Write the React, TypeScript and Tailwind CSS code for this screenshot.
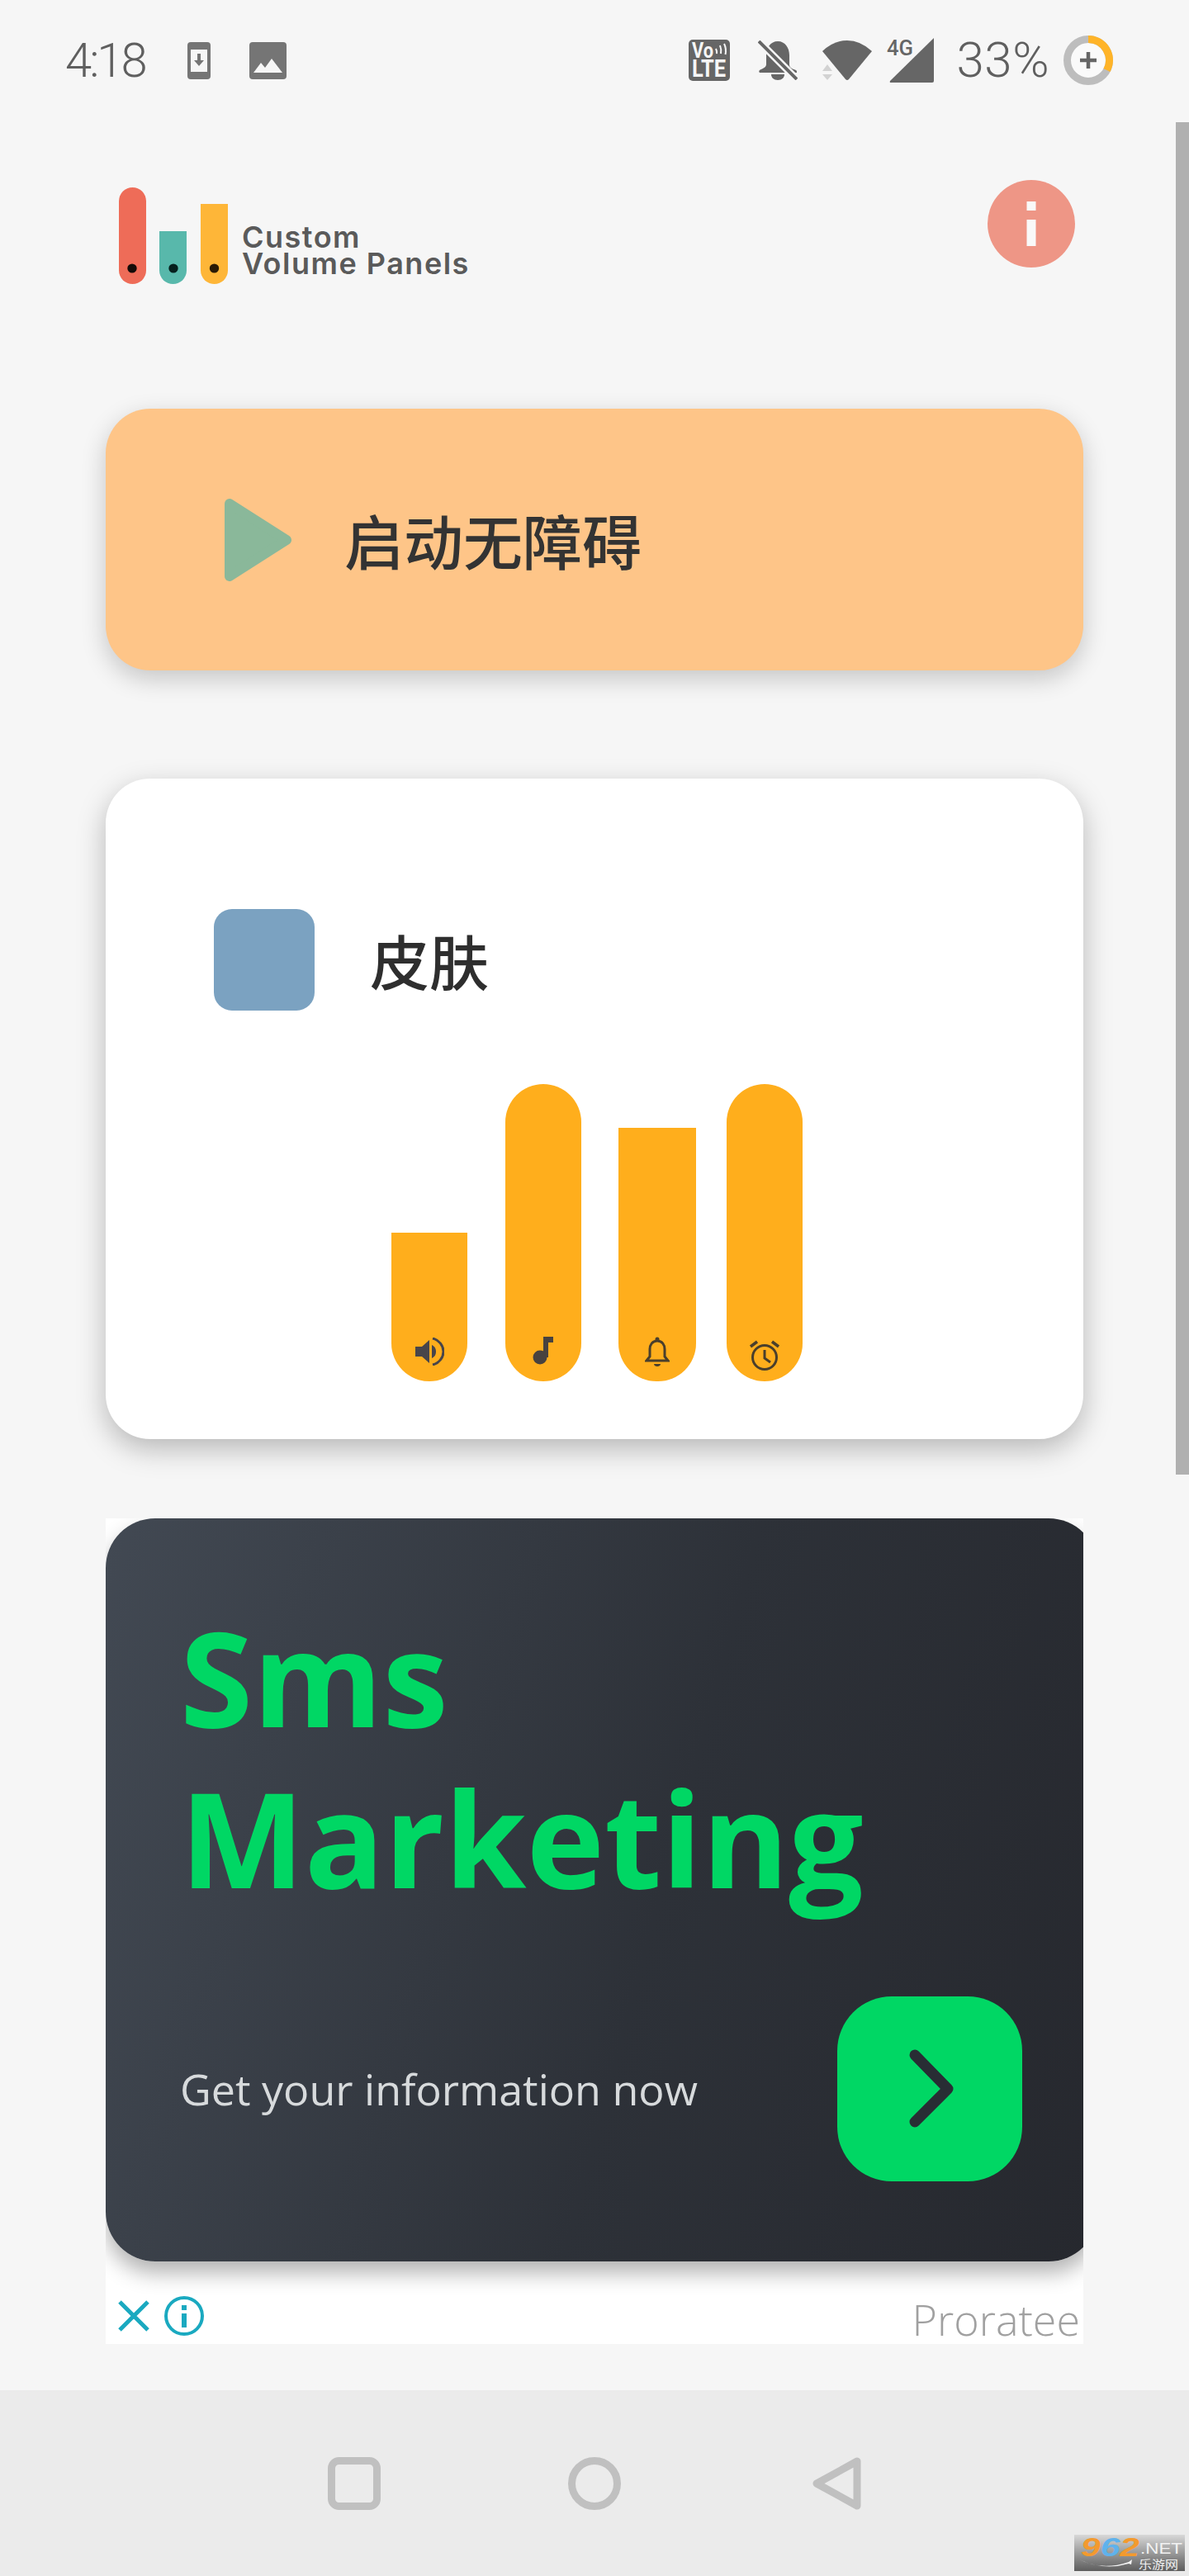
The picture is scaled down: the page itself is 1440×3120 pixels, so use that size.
type Bar = { height: string; shape: string; margin: string; width: string; pad: string; icon: 'speaker' | 'music' | 'bell' | 'alarm' }

const BARS: Bar[] = [
  { height: 'h-[180px]', shape: 'rounded-b-[46px]', margin: 'ml-0', width: 'w-[92px]', pad: 'pb-[19px]', icon: 'speaker' },
  { height: 'h-[360px]', shape: 'rounded-[46px]', margin: 'ml-[46px]', width: 'w-[92px]', pad: 'pb-[19px]', icon: 'music' },
  { height: 'h-[307px]', shape: 'rounded-b-[46px]', margin: 'ml-[45px]', width: 'w-[94px]', pad: 'pb-[17px]', icon: 'bell' },
  { height: 'h-[360px]', shape: 'rounded-[46px]', margin: 'ml-[37px]', width: 'w-[92px]', pad: 'pb-[13px]', icon: 'alarm' },
]

function VolumeIcon({ name }: { name: Bar['icon'] }) {
  if (name === 'speaker') {
    return (
      <svg width="36" height="34" viewBox="0 0 36 34" fill="#48454a">
        <path d="M1 11h8L18 3v28l-9-8H1z" />
        <path d="M21 9c4 2 5 5 5 8s-1 6-5 8z" />
        <path d="M22 1c8 2 13 9 13 16s-5 14-13 16" fill="none" stroke="#48454a" strokeWidth="3" />
      </svg>
    )
  }
  if (name === 'music') {
    return (
      <svg width="26" height="36" viewBox="0 0 26 36" fill="#48423f">
        <circle cx="9" cy="26" r="8.5" />
        <path d="M13 1h12v7h-6v18h-6z" />
      </svg>
    )
  }
  if (name === 'bell') {
    return (
      <svg width="30" height="37" viewBox="0 0 30 37" fill="none" stroke="#4a3f2c" strokeWidth="3">
        <path d="M15 5c-6 0-9 5-9 10v9l-4 5h26l-4-5v-9c0-5-3-10-9-10z" />
        <circle cx="15" cy="3" r="2.5" fill="#4a3f2c" stroke="none" />
        <path d="M11 33h8c0 2-2 3-4 3s-4-1-4-3z" fill="#4a3f2c" stroke="none" />
      </svg>
    )
  }
  return (
    <svg width="38" height="38" viewBox="0 0 38 38" fill="none" stroke="#4a3f2c" strokeWidth="3">
      <circle cx="19" cy="22" r="14.5" />
      <path d="M19 13v10l7 5" />
      <path d="M2 9l8-6M36 9l-8-6" strokeWidth="3.5" />
    </svg>
  )
}

function DownloadPhone() {
  return (
    <svg width="28" height="45" viewBox="0 0 28 45">
      <rect width="28" height="45" rx="4" fill="#757575" />
      <rect x="4" y="9" width="20" height="27" fill="#f6f6f6" />
      <path d="M12 14h4v8h4l-6 7-6-7h4z" fill="#757575" />
    </svg>
  )
}

function PictureIcon() {
  return (
    <svg width="45" height="45" viewBox="0 0 45 45">
      <rect width="45" height="45" rx="4" fill="#757575" />
      <path d="M5 37l9-12 5 6 8-11 13 17z" fill="#f6f6f6" />
    </svg>
  )
}

function VoLte() {
  return (
    <svg width="50" height="50" viewBox="0 0 50 50">
      <rect width="50" height="50" rx="5" fill="#666" />
      <text x="4" y="22" fontFamily="Roboto, sans-serif" fontWeight="700" fontSize="25" fill="#f6f6f6" textLength="26" lengthAdjust="spacingAndGlyphs">Vo</text>
      <path d="M33 11q1.5 3 1 6M38 7q2 5 1 10M43 5q3 6 1.500 13" fill="none" stroke="#f6f6f6" strokeWidth="2" />
      <text x="4" y="45" fontFamily="Roboto, sans-serif" fontWeight="700" fontSize="30" fill="#f6f6f6" textLength="41" lengthAdjust="spacingAndGlyphs">LTE</text>
    </svg>
  )
}

function BellOff() {
  return (
    <svg width="48" height="48" viewBox="0 0 48 48">
      <path d="M24 1c9 0 14 8 14 17v11c0 4 3 5 8 7 1 .500 1 2 1 3H2c-1-1-1-2 0-3 3-2 8-3 8-7V18C10 9 15 1 24 1z" fill="#666" />
      <path d="M16 41h16c0 4-3 7-8 7s-8-3-8-7z" fill="#666" />
      <path d="M1 1l46 46" stroke="#f6f6f6" strokeWidth="9" />
      <path d="M1 1l46 46" stroke="#666" strokeWidth="4" />
    </svg>
  )
}

function Wifi() {
  return (
    <svg width="60" height="49" viewBox="0 0 60 49">
      <path d="M0 13Q14 0 30 0T60 13L32 47q-2 2-4 0z" fill="#666" />
      <path d="M6 29l6 8H0zM0 41h12l-6 7z" fill="#d2d2d2" />
    </svg>
  )
}

function Signal() {
  return (
    <svg width="58" height="54" viewBox="0 0 58 54">
      <path d="M57 0v52q0 2-2 2H5q-2 0-1-2z" fill="#666" />
      <text x="0" y="21" fontFamily="Roboto, sans-serif" fontWeight="500" fontSize="25" fill="#666" textLength="32" lengthAdjust="spacingAndGlyphs">4G</text>
    </svg>
  )
}

function BatteryRing() {
  return (
    <svg width="60" height="60" viewBox="0 0 60 60">
      <circle cx="30" cy="30" r="25.500" fill="#fafafa" stroke="#bdbdbd" strokeWidth="9" />
      <path d="M30 4.500A25.500 25.500 0 0 1 52.500 42" fill="none" stroke="#ffb428" strokeWidth="9" />
      <path d="M30 20v20M20 30h20" stroke="#666" strokeWidth="4.500" />
    </svg>
  )
}

function StatusBar() {
  return (
    <div className="flex h-[146px] items-center justify-between pl-[79px] pr-[92px]">
      <div className="flex items-center">
        <span className="font-['Roboto',sans-serif] text-[58px] font-light leading-none tracking-[-3px] text-[#5f5f5f]">4:18</span>
        <span className="ml-[51px]"><DownloadPhone /></span>
        <span className="ml-[47px]"><PictureIcon /></span>
      </div>
      <div className="flex items-center">
        <VoLte />
        <span className="ml-[34px]"><BellOff /></span>
        <span className="ml-[30px]"><Wifi /></span>
        <span className="ml-[18px]"><Signal /></span>
        <span className="ml-[27px] font-['Roboto',sans-serif] text-[60px] font-light leading-none tracking-[0.5px] text-[#5f5f5f]">33%</span>
        <span className="ml-[17px]"><BatteryRing /></span>
      </div>
    </div>
  )
}

function Logo() {
  return (
    <div className="flex items-end">
      <svg width="132" height="117" viewBox="0 0 132 117">
        <rect width="33" height="117" rx="16.500" fill="#ee6c58" />
        <path d="M49 53h33v47.500a16.500 16.500 0 0 1-33 0z" fill="#58b8ab" />
        <path d="M99 20h33v80.500a16.500 16.500 0 0 1-33 0z" fill="#feb638" />
        <ellipse cx="16" cy="98" rx="5.700" ry="5.500" fill="#140b08" />
        <ellipse cx="66" cy="98" rx="5.700" ry="5.500" fill="#06201d" />
        <ellipse cx="115.500" cy="98" rx="5.700" ry="5.500" fill="#2a1a05" />
      </svg>
      <div className="mb-[9px] ml-[17px] font-['Inter',sans-serif] text-[36px] font-semibold leading-[32px] tracking-[1.5px] text-[#5a5a5a]">
        <div>Custom</div>
        <div>Volume Panels</div>
      </div>
    </div>
  )
}

function Header() {
  return (
    <div className="flex h-[349px] items-start justify-between pl-[144px] pr-[138px] pt-[72px]">
      <div className="pt-[9px]"><Logo /></div>
      <svg width="106" height="106" viewBox="0 0 106 106">
        <circle cx="53" cy="53" r="53" fill="#ee9686" />
        <path d="M47.500 26h11v11h-11zM47.500 48h11v32h-11z" fill="#f9f9f9" />
      </svg>
    </div>
  )
}

function StartCard() {
  return (
    <div className="flex h-[317px] items-center rounded-[54px] bg-[#fec588] pl-[144px] shadow-[0_10px_30px_rgba(0,0,0,0.2)]">
      <svg width="81" height="100" viewBox="0 0 81 100">
        <path d="M6 6l69 44-69 44z" fill="#8ab89a" stroke="#8ab89a" strokeWidth="12" strokeLinejoin="round" />
      </svg>
      <span className="ml-[64px] -mt-[2px] font-['Noto_Sans_CJK_SC',sans-serif] text-[72px] font-medium leading-none text-[#333333]">启动无障碍</span>
    </div>
  )
}

function SkinCard() {
  return (
    <div className="mt-[131px] h-[800px] rounded-[54px] bg-white pl-[131px] pt-[158px] shadow-[0_12px_34px_rgba(0,0,0,0.26)]">
      <div className="flex items-center">
        <div className="h-[123px] w-[122px] rounded-[22px] bg-[#7ba2c1]" />
        <span className="ml-[67px] -mt-[2px] font-['Noto_Sans_CJK_SC',sans-serif] text-[72px] font-medium leading-none text-[#2e2e2e]">皮肤</span>
      </div>
      <div className="ml-[215px] mt-[89px] flex items-end">
        {BARS.map((bar) => (
          <div key={bar.icon} className={`flex flex-col items-center justify-end bg-[#ffae1c] ${bar.height} ${bar.shape} ${bar.margin} ${bar.width} ${bar.pad}`}>
            <VolumeIcon name={bar.icon} />
          </div>
        ))}
      </div>
    </div>
  )
}

function AdCard() {
  return (
    <div className="mt-[96px] h-[1000px] overflow-hidden bg-white font-['Open_Sans',sans-serif]">
      <div className="h-[900px] w-[1202px] rounded-[60px] bg-linear-[105deg,#424953,#2d3138_55%,#26282e] pl-[90px] pr-[92px] pt-[94px] shadow-[0_14px_26px_rgba(0,0,0,0.3)]">
        <div className="text-[160px] font-bold leading-[195px] text-[#00d764]">
          <div>Sms</div>
          <div>Marketing</div>
        </div>
        <div className="mt-[95px] flex items-center justify-between">
          <span className="text-[52px] text-[#d7dadc]">Get your information now</span>
          <div className="flex h-[224px] w-[224px] items-center justify-center rounded-[66px] bg-[#00d764]">
            <svg width="224" height="224" viewBox="0 0 224 224" fill="none">
              <path d="M94 71l40 41-40 40" stroke="#282d34" strokeWidth="13" strokeLinecap="round" strokeLinejoin="round" />
            </svg>
          </div>
        </div>
      </div>
      <div className="flex items-start justify-between pl-[15px] pr-[4px] pt-[42px]">
        <div className="flex items-center">
          <svg width="38" height="38" viewBox="0 0 38 38" fill="none" stroke="#1aa9c0" strokeWidth="5">
            <path d="M2 2l34 34M36 2L2 36" />
          </svg>
          <svg className="ml-[18px]" width="48" height="48" viewBox="0 0 48 48" fill="none">
            <circle cx="24" cy="24" r="22" stroke="#1aa9c0" strokeWidth="4" />
            <path d="M21 11h6v6h-6zM21 21h6v17h-6z" fill="#1aa9c0" />
          </svg>
        </div>
        <span className="text-[52px] font-light leading-[56px] text-[#a0a0a0]">Proratee</span>
      </div>
    </div>
  )
}

function NavBar() {
  return (
    <div className="mt-[56px] flex h-[225px] items-start bg-[#ebebeb] pl-[397px] pt-[81px]">
      <svg width="64" height="64" viewBox="0 0 64 64" fill="none" stroke="#c0c0c0" strokeWidth="9">
        <rect x="4.500" y="4.500" width="55" height="55" rx="9" />
      </svg>
      <svg className="ml-[227px]" width="64" height="64" viewBox="0 0 64 64" fill="none" stroke="#c0c0c0" strokeWidth="9">
        <circle cx="32" cy="32" r="27.500" />
      </svg>
      <svg className="ml-[232px]" width="59" height="64" viewBox="0 0 59 64" fill="none" stroke="#c0c0c0" strokeWidth="9" strokeLinejoin="round">
        <path d="M54 5v54L5 32z" />
      </svg>
    </div>
  )
}

function Watermark() {
  return (
    <div className="absolute left-[1301px] top-[3070px] h-[44px] w-[134px] bg-linear-to-b from-[#d8d8d8] via-[#9a9a9a] to-[#5e5e5e]">
      <svg width="134" height="44" viewBox="0 0 134 44">
        <text x="8" y="26" fontFamily="Liberation Sans, sans-serif" fontWeight="700" fontStyle="italic" fontSize="31" textLength="71" lengthAdjust="spacingAndGlyphs">
          <tspan fill="#f39a2e">9</tspan>
          <tspan fill="#5fb2ec">6</tspan>
          <tspan fill="#f39a2e">2</tspan>
        </text>
        <text x="80" y="23" fontFamily="Liberation Sans, sans-serif" fontSize="19" fill="#f2f2f2" textLength="51" lengthAdjust="spacingAndGlyphs">.NET</text>
        <text x="78" y="41" fontFamily="Noto Sans CJK SC, sans-serif" fontSize="14" fill="#f0f0f0" textLength="48" lengthAdjust="spacingAndGlyphs">乐游网</text>
        <path d="M6 30q28 14 60 3l4-3-1 6-3-1q-30 9-60-5z" fill="#f4f4f4" />
      </svg>
    </div>
  )
}

export default function App() {
  return (
    <div className="relative h-[3120px] w-[1440px] overflow-hidden bg-[#f6f6f6]">
      <StatusBar />
      <Header />
      <div className="px-[128px]">
        <StartCard />
        <SkinCard />
        <AdCard />
      </div>
      <NavBar />
      <div className="absolute right-0 top-[148px] h-[1638px] w-[16px] bg-[#b0b0b0]" />
      <Watermark />
    </div>
  )
}
